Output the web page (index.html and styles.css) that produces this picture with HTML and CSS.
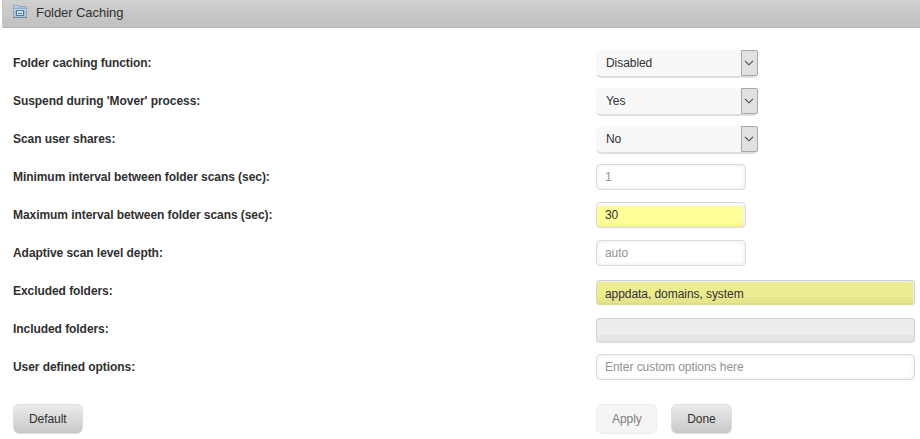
FILE: index.html
```
<!DOCTYPE html>
<html lang="en">
<head>
  <meta charset="UTF-8" />
  <title>Folder Caching</title>
  <link rel="stylesheet" href="styles.css">
</head>
<body>
  <div class="title">
    <svg class="icon" width="16" height="16" viewBox="0 0 16 16">
      <path d="M1.5 13V1.5h5v1h8V13" fill="#a9c4da" stroke="#90a9bf"/>
      <path d="M2 4.5h12" stroke="#90a9bf"/>
      <path d="M2 2.5h4M2 5.5h12" stroke="#c9dbe9"/>
      <rect x="4.5" y="6.5" width="7" height="5" fill="#d3e3f0" stroke="#4f789e"/>
      <path d="M6 9.5h4" stroke="#4f789e"/>
      <path d="M1 13.5h14" stroke="#74879a"/>
    </svg>
    <span>Folder Caching</span>
  </div>

  <form class="settings">
    <div class="row">
      <label for="service">Folder caching function:</label>
      <div class="select">
        <select id="service"><option>Disabled</option><option>Enabled</option></select>
        <span class="arrow"><svg width="10" height="6" viewBox="0 0 10 6"><path d="M1 .8l4 4 4-4"/></svg></span>
      </div>
    </div>
    <div class="row">
      <label for="suspend">Suspend during 'Mover' process:</label>
      <div class="select">
        <select id="suspend"><option>Yes</option><option>No</option></select>
        <span class="arrow"><svg width="10" height="6" viewBox="0 0 10 6"><path d="M1 .8l4 4 4-4"/></svg></span>
      </div>
    </div>
    <div class="row">
      <label for="shares">Scan user shares:</label>
      <div class="select">
        <select id="shares"><option>No</option><option>Yes</option></select>
        <span class="arrow"><svg width="10" height="6" viewBox="0 0 10 6"><path d="M1 .8l4 4 4-4"/></svg></span>
      </div>
    </div>
    <div class="row">
      <label for="minimum">Minimum interval between folder scans (sec):</label>
      <input type="text" id="minimum" class="narrow" placeholder="1">
    </div>
    <div class="row">
      <label for="maximum">Maximum interval between folder scans (sec):</label>
      <input type="text" id="maximum" class="narrow changed" value="30">
    </div>
    <div class="row">
      <label for="depth">Adaptive scan level depth:</label>
      <input type="text" id="depth" class="narrow" placeholder="auto">
    </div>
    <div class="row">
      <label for="exclude">Excluded folders:</label>
      <input type="text" id="exclude" class="folders filled" value="appdata, domains, system">
    </div>
    <div class="row">
      <label for="include">Included folders:</label>
      <input type="text" id="include" class="folders">
    </div>
    <div class="row">
      <label for="options">User defined options:</label>
      <input type="text" id="options" placeholder="Enter custom options here">
    </div>
    <div class="row buttons">
      <div class="left"><button type="button">Default</button></div>
      <button type="button" disabled>Apply</button>
      <button type="button">Done</button>
    </div>
  </form>
</body>
</html>
```
FILE: styles.css
```
* {
  box-sizing: border-box;
}
body {
  font-family: "Liberation Sans", Arial, sans-serif;
  font-size: 12px;
  letter-spacing: -0.06px;
  color: #303030;
  background: #fff;
  margin: 0;
}
.title {
  display: flex;
  align-items: center;
  height: 28px;
  margin-left: 2px;
  padding: 0 0 3px 9px;
  border-left: 1px solid #c8c8c8;
  border-bottom: 1px solid #b8b8b8;
  background: linear-gradient(#d0d0d0, #c0c0c0);
  font-size: 13px;
}
.icon {
  margin-right: 8px;
}
.settings {
  padding: 16px 5px 0 13px;
}
.row {
  display: flex;
  align-items: center;
  height: 38px;
}
label, .left {
  width: 583px;
  flex: none;
}
label {
  font-weight: bold;
}
input, select, button {
  font-family: inherit;
  font-size: 12px;
  letter-spacing: inherit;
  color: #303030;
  margin: 0;
}
input {
  width: 319px;
  height: 26px;
  padding: 0 8px;
  border: 1px solid #dcdcdc;
  border-radius: 4px;
  background: #fff;
  box-shadow: inset 0 0 5px #e8e8e8;
}
input::placeholder {
  color: #929292;
}
.narrow {
  width: 150px;
}
.changed {
  background: linear-gradient(#ffff99, #ffff99) 0 3px / 146px 22px no-repeat #fafafa;
  box-shadow: inset 0 -2px 4px rgba(0,0,0,0.06);
}
.folders {
  height: 25px;
  margin-top: 3px;
  padding-top: 3px;
  border-color: #cfcfcf #cfcfcf #dcdcdc;
  background: linear-gradient(#ededed 16px, #e5e5e5 16px, #e5e5e5 22px, #dcdcdc 22px);
  box-shadow: none;
}
.filled {
  border-bottom-color: #dcdc8a;
  border-left-color: #dcdca0;
  background: linear-gradient(#ecec90 15px, #e5e58c 15px, #e5e58c 21px, #dcdc87 21px) 0 1px / 316px 23px no-repeat #eee;
}
.select {
  display: flex;
  width: 162px;
  height: 28px;
  margin-top: 2px;
  border-bottom: 2px solid #dedede;
  border-radius: 5px;
  background: #f8f8f8;
}
select {
  appearance: none;
  width: 145px;
  height: 26px;
  padding: 0 10px;
  border: none;
  background: none;
}
.arrow {
  display: flex;
  align-items: center;
  justify-content: center;
  width: 17px;
  height: 26px;
  padding-right: 1px;
  border: 1px solid #a8a8a8;
  border-radius: 0 2px 2px 0;
  background: #e1e1e1;
}
.arrow path {
  fill: none;
  stroke: #484848;
  stroke-width: 1.1;
}
.buttons {
  height: 66px;
}
button {
  min-width: 61px;
  height: 30px;
  margin-right: 14px;
  padding: 0 15px;
  border: 1px solid #dedede;
  border-radius: 6px;
  background: linear-gradient(#ebebeb, #c8c8c8);
}
button:disabled {
  width: 61px;
  border-color: #ededed;
  background: #f5f5f5;
  color: #808080;
}
```
